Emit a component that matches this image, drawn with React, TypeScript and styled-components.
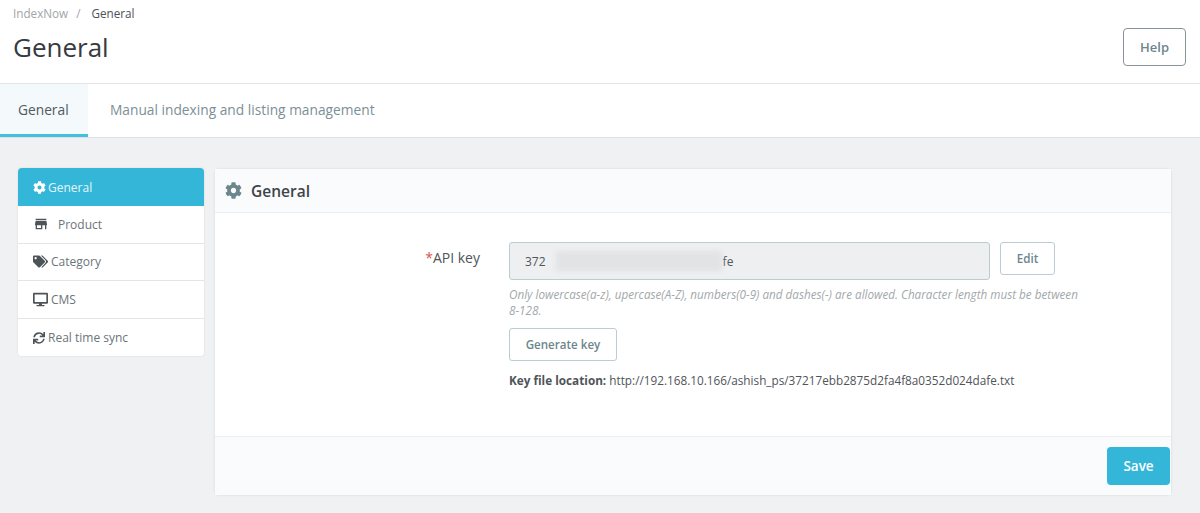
import { createGlobalStyle, styled } from "styled-components";
import { FaCog, FaTags, FaDesktop, FaSync } from "react-icons/fa";
import { MdStore } from "react-icons/md";
import { ReactNode } from "react";

const GlobalStyle = createGlobalStyle`
html, body {
    margin: 0;
    padding: 0;
    height: 513px;
    overflow: hidden;
    background: #eff1f2;
    font-family: "Open Sans", "Noto Sans", sans-serif;
    color: #363a41;
}
* { box-sizing: border-box; }
`

const Header = styled.header`
height: 84px;
background: #fff;
border-bottom: 1px solid #e3e5e6;
padding: 6px 14px 0 13px;
display: flex;
justify-content: space-between;
`
const Breadcrumb = styled.div`
font-size: 11.7px;
line-height: 15px;
color: #a0a5a9;
display: flex;
gap: 8px;
span:last-child { color: #4b5055; margin-left: 3px; }
`
const Title = styled.h1`
margin: 6px 0 0;
font-size: 26px;
line-height: 40px;
font-weight: 400;
color: #363a41;
`
const HelpButton = styled.button`
width: 63px;
height: 38px;
margin-top: 22px;
background: #fff;
border: 1px solid #8a9399;
border-radius: 4px;
font-family: inherit;
font-size: 13px;
font-weight: 600;
color: #6c868e;
`
const Tabs = styled.nav`
height: 54px;
background: #fff;
border-bottom: 1px solid #dfe2e4;
display: flex;
`
const Tab = styled.div<{ $active?: boolean }>`
padding: 1px 22px 0;
height: 53px;
display: flex;
align-items: center;
font-size: 13.75px;
color: ${props => (props.$active ? "#50595e" : "#7c8f96")};
background: ${props => (props.$active ? "#f4f9fb" : "#fff")};
border-bottom: 3px solid ${props => (props.$active ? "#42c0dc" : "transparent")};
&:first-child { width: 88px; padding: 1px 0 0 18px; }
`
const Content = styled.main`
display: flex;
align-items: flex-start;
gap: 11px;
padding: 30px 29px 0 18px;
`
const SideMenu = styled.aside`
width: 186px;
flex-shrink: 0;
background: #fff;
border-radius: 4px;
box-shadow: 0 0 2px rgba(0, 0, 0, 0.12);
overflow: hidden;
`
const MenuRow = styled.div<{ $active?: boolean; $gap?: number }>`
height: 37.6px;
display: flex;
align-items: center;
gap: ${props => props.$gap ?? 3}px;
padding-left: 15px;
font-size: 12px;
color: ${props => (props.$active ? "#e4f6fa" : "#6c7479")};
background: ${props => (props.$active ? "#34b6d8" : "#fff")};
border-bottom: 1px solid #e3e5e6;
&:first-child { height: 38px; border-bottom: none; }
&:last-child { border-bottom: none; }
svg { flex-shrink: 0; color: ${props => (props.$active ? "#fff" : "#4d5458")}; }
`
const Panel = styled.section`
flex: 1;
height: 326px;
margin-top: 1px;
background: #fff;
border-radius: 4px;
box-shadow: 0 0 3px rgba(0, 0, 0, 0.1);
display: flex;
flex-direction: column;
`
const PanelHeader = styled.div`
height: 44px;
flex-shrink: 0;
background: #fafbfc;
border-bottom: 1px solid #eceef0;
display: flex;
align-items: center;
gap: 9px;
padding-left: 10px;
font-size: 15.5px;
font-weight: 600;
color: #3f4449;
svg { color: #6c868e; }
`
const PanelBody = styled.div`
flex: 1;
display: grid;
grid-template-columns: 265px 1fr;
column-gap: 29px;
padding-top: 29px;
`
const FieldLabel = styled.label`
text-align: right;
font-size: 14px;
line-height: 32px;
color: #4f5459;
b { color: #d9534f; font-weight: 400; }
`
const FieldColumn = styled.div`
width: 580px;
`
const InputRow = styled.div`
display: flex;
align-items: flex-start;
gap: 10px;
`
const KeyInput = styled.div`
width: 481px;
height: 38px;
background: #eeeff0;
border: 1px solid #bbcdd2;
border-radius: 3px;
display: flex;
align-items: center;
padding-left: 15px;
font-size: 12px;
color: #50565a;
`
const Redacted = styled.span`
width: 166px;
height: 20px;
margin: 0 1px 0 10px;
background: #e2e3e4;
filter: blur(2px);
`
const OutlineButton = styled.button<{ $width: number }>`
width: ${props => props.$width}px;
height: 33px;
background: #fff;
border: 1px solid #bbcdd2;
border-radius: 3px;
font-family: inherit;
font-size: 11.6px;
font-weight: 600;
color: #6c868e;
padding: 0;
`
const HelpText = styled.p`
margin: 6px 0 10px;
font-size: 11.7px;
line-height: 16px;
font-style: italic;
color: #a3a8ab;
`
const KeyLocation = styled.p`
margin: 11px 0 0;
font-size: 11.75px;
line-height: 16px;
color: #4f5459;
b { font-weight: 700; }
`
const PanelFooter = styled.div`
height: 59px;
flex-shrink: 0;
background: #fafbfc;
border-top: 1px solid #eceef0;
display: flex;
justify-content: flex-end;
align-items: center;
padding-right: 1px;
`
const SaveButton = styled.button`
width: 63px;
height: 38px;
background: #34b6d8;
border: none;
border-radius: 4px;
font-family: inherit;
font-size: 13.5px;
font-weight: 600;
color: #fff;
`

const menu: { label: string; icon: ReactNode; gap?: number }[] = [
    { label: "General", icon: <FaCog size={13} />, gap: 2 },
    { label: "Product", icon: <MdStore size={16} />, gap: 9 },
    { label: "Category", icon: <FaTags size={15} />, gap: 3 },
    { label: "CMS", icon: <FaDesktop size={15} />, gap: 3 },
    { label: "Real time sync", icon: <FaSync size={12} />, gap: 3 },
];

const App = () => {
    return (
        <>
            <GlobalStyle />
            <Header>
                <div>
                    <Breadcrumb>
                        <span>IndexNow</span>
                        <span>/</span>
                        <span>General</span>
                    </Breadcrumb>
                    <Title>General</Title>
                </div>
                <HelpButton>Help</HelpButton>
            </Header>
            <Tabs>
                <Tab $active>General</Tab>
                <Tab>Manual indexing and listing management</Tab>
            </Tabs>
            <Content>
                <SideMenu>
                    {menu.map((item, i) => (
                        <MenuRow key={item.label} $active={i === 0} $gap={item.gap}>
                            {item.icon}
                            {item.label}
                        </MenuRow>
                    ))}
                </SideMenu>
                <Panel>
                    <PanelHeader>
                        <FaCog size={17} />
                        General
                    </PanelHeader>
                    <PanelBody>
                        <FieldLabel><b>*</b>API key</FieldLabel>
                        <FieldColumn>
                            <InputRow>
                                <KeyInput>372<Redacted />fe</KeyInput>
                                <OutlineButton $width={55}>Edit</OutlineButton>
                            </InputRow>
                            <HelpText>
                                Only lowercase(a-z), upercase(A-Z), numbers(0-9) and dashes(-) are allowed. Character length must be between 8-128.
                            </HelpText>
                            <OutlineButton $width={108}>Generate key</OutlineButton>
                            <KeyLocation>
                                <b>Key file location:</b> http://192.168.10.166/ashish_ps/37217ebb2875d2fa4f8a0352d024dafe.txt
                            </KeyLocation>
                        </FieldColumn>
                    </PanelBody>
                    <PanelFooter>
                        <SaveButton>Save</SaveButton>
                    </PanelFooter>
                </Panel>
            </Content>
        </>
    )
}

export default App
